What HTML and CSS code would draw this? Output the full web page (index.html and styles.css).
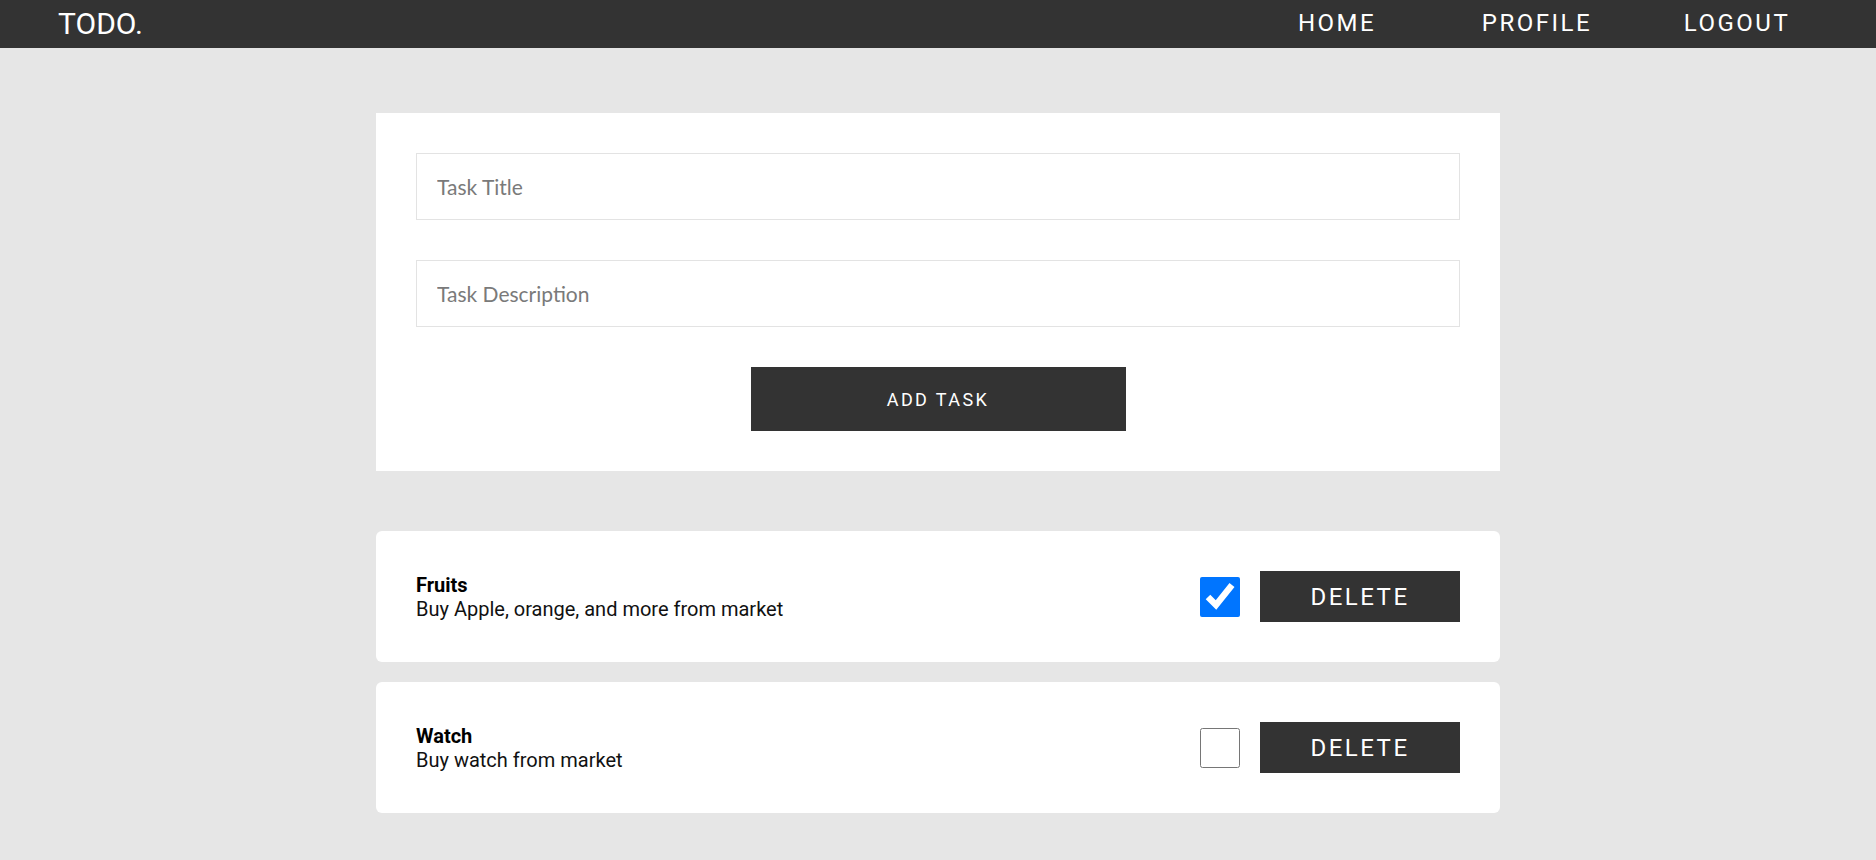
FILE: index.html
```html
<!DOCTYPE html>
<html lang="en">
<head>
<meta charset="utf-8">
<title>TODO.</title>
<link rel="stylesheet" href="styles.css">
</head>
<body>
<header class="navbar">
  <div class="logo">TODO.</div>
  <nav class="nav-links">
    <a class="nav-link" href="#">HOME</a>
    <a class="nav-link" href="#">PROFILE</a>
    <a class="nav-link" href="#">LOGOUT</a>
  </nav>
</header>

<main class="main">
  <form class="task-form">
    <input class="task-input" type="text" placeholder="Task Title">
    <input class="task-input" type="text" placeholder="Task Description">
    <button class="add-btn" type="button">ADD TASK</button>
  </form>

  <section class="task-list">
    <div class="task-card">
      <div class="task-text">
        <div class="task-title">Fruits</div>
        <div class="task-desc">Buy Apple, orange, and more from market</div>
      </div>
      <div class="task-actions">
        <input class="task-check" type="checkbox" checked>
        <button class="delete-btn" type="button">DELETE</button>
      </div>
    </div>
    <div class="task-card">
      <div class="task-text">
        <div class="task-title">Watch</div>
        <div class="task-desc">Buy watch from market</div>
      </div>
      <div class="task-actions">
        <input class="task-check" type="checkbox">
        <button class="delete-btn" type="button">DELETE</button>
      </div>
    </div>
  </section>
</main>
</body>
</html>
```
FILE: styles.css
```css
* {
  box-sizing: border-box;
}

body {
  margin: 0;
  background: #e6e6e6;
  font-family: Roboto, "Liberation Sans", sans-serif;
  color: #111;
}

.navbar {
  height: 48px;
  background: #333333;
  display: flex;
  align-items: center;
  justify-content: space-between;
  padding: 0 39px 2px 58px;
}

.logo {
  color: #ffffff;
  font-size: 30px;
  font-weight: 400;
}

.nav-links {
  display: flex;
}

.nav-link {
  width: 200px;
  text-align: center;
  color: #ffffff;
  text-decoration: none;
  font-size: 24px;
  letter-spacing: 2.5px;
}

.main {
  width: 1124px;
  margin: 0 auto;
  padding-top: 65px;
}

.task-form {
  background: #ffffff;
  padding: 40px;
  display: flex;
  flex-direction: column;
  align-items: center;
  gap: 40px;
  margin: 0;
}

.task-input {
  width: 100%;
  height: 67px;
  border: 1px solid #e3e3e3;
  padding: 0 20px;
  font-family: Lato, "Open Sans", sans-serif;
  font-weight: 400;
  font-size: 21px;
  color: #333;
  outline: none;
  background: #fff;
}

.task-input::placeholder {
  color: #7a7a7a;
}

.add-btn {
  width: 375px;
  height: 64px;
  background: #333333;
  color: #ffffff;
  border: none;
  font-family: Roboto, "Liberation Sans", sans-serif;
  font-size: 18px;
  letter-spacing: 2.4px;
  cursor: pointer;
}

.task-list {
  margin-top: 60px;
  display: flex;
  flex-direction: column;
  gap: 20px;
}

.task-card {
  background: #ffffff;
  border-radius: 6px;
  padding: 40px;
  display: flex;
  align-items: center;
  justify-content: space-between;
}

.task-title {
  font-size: 20px;
  font-weight: 700;
  color: #000;
}

.task-desc {
  font-size: 20px;
  color: #111;
}

.task-actions {
  display: flex;
  align-items: center;
  gap: 20px;
}

.task-check {
  width: 40px;
  height: 40px;
  margin: 0;
}

.delete-btn {
  width: 200px;
  height: 51px;
  background: #333333;
  color: #ffffff;
  border: none;
  font-family: Roboto, "Liberation Sans", sans-serif;
  font-size: 24px;
  letter-spacing: 2.5px;
  cursor: pointer;
}
```
